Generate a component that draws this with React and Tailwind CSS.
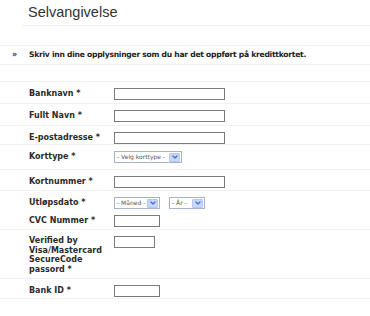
import { ChevronDown } from "lucide-react";

const label = "font-['DejaVu_Sans',sans-serif] text-[8px] font-bold leading-[9.5px] text-[#2b2b2b]";

function TextBox({ width }) {
  return <div className={`h-[12px] border border-[#7a7a7a] bg-white ${width}`} />;
}

function FakeSelect({ text, width }) {
  return (
    <div className={`flex h-[12px] items-center justify-between border border-[#a5b4cc] bg-white pl-[2px] pr-[1px] ${width}`}>
      <span className="font-['DejaVu_Sans',sans-serif] text-[6px] leading-none text-[#555]">{text}</span>
      <span className="flex h-[9px] w-[11px] items-center justify-center rounded-[1px] border border-[#b7c8ef] bg-[#c9d8fa]">
        <ChevronDown size={8} strokeWidth={4} className="text-[#4d6fc4]" />
      </span>
    </div>
  );
}

// every row: control sits 6px below the row's top edge
function Row({ name, height, children, line = true, top = false }) {
  return (
    <div className={`${height} pt-[6px] ${line ? "border-b border-[#f1f1f1]" : ""}`}>
      <div className={`flex ${top ? "items-start" : "min-h-[12px] items-center"}`}>
        <div className={`w-[114px] shrink-0 pl-[29px] pr-[6px] ${label}`}>{name}</div>
        <div className="flex items-center gap-[9px]">{children}</div>
      </div>
    </div>
  );
}

export default function App() {
  return (
    <div className="h-[316px] w-[370px] overflow-hidden bg-white">
      <div className="ml-[22px] flex h-[26px] items-center border-b border-[#eeeeee] pl-[6px]">
        <h1 className="font-['Liberation_Sans',Arial,sans-serif] text-[14.5px] leading-none text-[#333]">Selvangivelse</h1>
      </div>
      <div className="h-[20px] border-b border-[#f1f1f1]" />
      <div className="flex h-[19px] items-center border-b border-[#f1f1f1]">
        <span className="w-[29px] pl-[12px] font-['DejaVu_Sans',sans-serif] text-[8px] font-bold text-[#333]">»</span>
        <span className="font-['DejaVu_Sans',sans-serif] text-[7.6px] font-bold leading-[10px] tracking-[-0.25px] text-[#222]">
          Skriv inn dine opplysninger som du har det oppført på kredittkortet.
        </span>
      </div>
      <div className="h-[17px] border-b border-[#f1f1f1]" />
      <Row name="Banknavn *" height="h-[22px]"><TextBox width="w-[111px]" /></Row>
      <Row name="Fullt Navn *" height="h-[22px]"><TextBox width="w-[111px]" /></Row>
      <Row name="E-postadresse *" height="h-[19px]"><TextBox width="w-[111px]" /></Row>
      <Row name="Korttype *" height="h-[25px]"><FakeSelect text="- Velg korttype -" width="w-[68px]" /></Row>
      <Row name="Kortnummer *" height="h-[21px]"><TextBox width="w-[111px]" /></Row>
      <Row name="Utløpsdato *" height="h-[18px]" line={false}>
        <FakeSelect text="- Måned -" width="w-[46px]" />
        <FakeSelect text="- År -" width="w-[36px]" />
      </Row>
      <Row name="CVC Nummer *" height="h-[21px]"><TextBox width="w-[46px]" /></Row>
      <Row name="Verified by Visa/Mastercard SecureCode passord *" height="h-[49px]" top>
        <TextBox width="w-[41px]" />
      </Row>
      <Row name="Bank ID *" height="h-[20px]"><TextBox width="w-[46px]" /></Row>
    </div>
  );
}
